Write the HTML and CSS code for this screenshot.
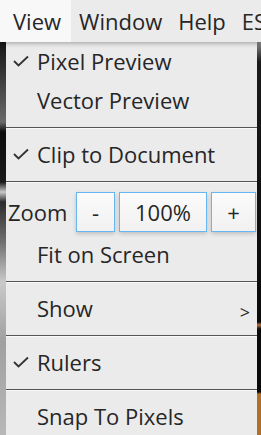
FILE: index.html
```html
<!DOCTYPE html>
<html>
<head>
<meta charset="utf-8">
<link rel="stylesheet" href="styles.css">
</head>
<body>
<div class="menubar">
  <span class="mb-item active">View</span>
  <span class="mb-item">Window</span>
  <span class="mb-item">Help</span>
  <span class="mb-item">ES</span>
</div>
<div class="stage">
  <div class="edge-left"></div>
  <div class="menu">
    <div class="section first">
      <div class="item"><svg class="check" viewBox="0 0 16 12" width="16" height="12"><polyline points="1,6 5.5,10.5 15,1.5" fill="none" stroke="#333" stroke-width="1.8"/></svg><span>Pixel Preview</span></div>
      <div class="item"><span>Vector Preview</span></div>
    </div>
    <div class="section">
      <div class="item"><svg class="check" viewBox="0 0 16 12" width="16" height="12"><polyline points="1,6 5.5,10.5 15,1.5" fill="none" stroke="#333" stroke-width="1.8"/></svg><span>Clip to Document</span></div>
    </div>
    <div class="section">
      <div class="zoom-row">
        <span class="zoom-label">Zoom</span>
        <span class="btn btn-minus">-</span>
        <span class="btn btn-value">100%</span>
        <span class="btn btn-plus">+</span>
      </div>
      <div class="item"><span>Fit on Screen</span></div>
    </div>
    <div class="section">
      <div class="item"><span>Show</span><span class="arrow">&gt;</span></div>
    </div>
    <div class="section">
      <div class="item"><svg class="check" viewBox="0 0 16 12" width="16" height="12"><polyline points="1,6 5.5,10.5 15,1.5" fill="none" stroke="#333" stroke-width="1.8"/></svg><span>Rulers</span></div>
    </div>
    <div class="section">
      <div class="item"><span>Snap To Pixels</span></div>
    </div>
  </div>
  <div class="edge-right"></div>
</div>
</body>
</html>
```
FILE: styles.css
```css
* { box-sizing: border-box; }
html, body {
  margin: 0;
  padding: 0;
  width: 261px;
  height: 435px;
  overflow: hidden;
  background: #1c1c1c;
  font-family: "Open Sans", "Noto Sans", sans-serif;
  color: #262626;
}
.menubar {
  height: 42px;
  display: flex;
  align-items: center;
  background: #ebebeb;
  font-size: 22px;
  position: relative;
  z-index: 2;
  box-shadow: 0 2px 4px rgba(0,0,0,0.25);
  white-space: nowrap;
}
.mb-item {
  height: 42px;
  display: flex;
  align-items: center;
  padding: 0 8px;
  flex-shrink: 0;
}
.mb-item.active {
  background: #f8f8f8;
  padding: 0 10px 0 13px;
}
.stage {
  display: grid;
  grid-template-columns: 6px 251px 4px;
  height: 393px;
}
.edge-left {
  background: linear-gradient(to bottom, #151515 0px, #6a6a6a 80px, #0c0c0c 90px, #1a1a1a 140px, #c8c8c8 150px, #2c2c2c 160px, #707070 200px, #c9c9c9 240px, #a0a0a0 300px, #b8b8b8 393px);
}
.edge-right {
  background: linear-gradient(to bottom, #8a8a8a 0px, #1a1a1a 20px, #0a0a0a 280px, #c07030 283px, #0a0a0a 287px, #0a0a0a 350px, #b0702a 352px, #b0702a 393px);
}
.menu {
  background: #ebebeb;
  font-size: 22px;
  white-space: nowrap;
}
.section {
  padding: 7px 0;
  border-top: 1px solid #555;
  box-shadow: inset 0 1px 0 #f8f8f8;
}
.section.first {
  padding-top: 0;
  border-top: none;
  box-shadow: none;
}
.item {
  height: 39px;
  display: flex;
  align-items: center;
  padding-left: 31px;
  padding-bottom: 2px;
  position: relative;
}
.check {
  position: absolute;
  left: 7px;
  top: 13px;
}
.arrow {
  margin-left: auto;
  margin-right: 7px;
  font-size: 18px;
  margin-top: 8px;
}
.zoom-row {
  height: 46px;
  display: flex;
  align-items: center;
  padding-left: 2px;
}
.zoom-label {
  width: 68px;
}
.btn {
  height: 40px;
  display: flex;
  align-items: center;
  justify-content: center;
  border: 1.5px solid #66b6f2;
  background: linear-gradient(to bottom, #fbfbfb, #f1f1f1);
  box-shadow: 0 2px 4px rgba(0,0,0,0.18);
  margin-right: 4px;
  flex-shrink: 0;
}
.btn-minus { width: 39px; }
.btn-value { width: 88px; }
.btn-plus { width: 45px; margin-right: 0; }
```
